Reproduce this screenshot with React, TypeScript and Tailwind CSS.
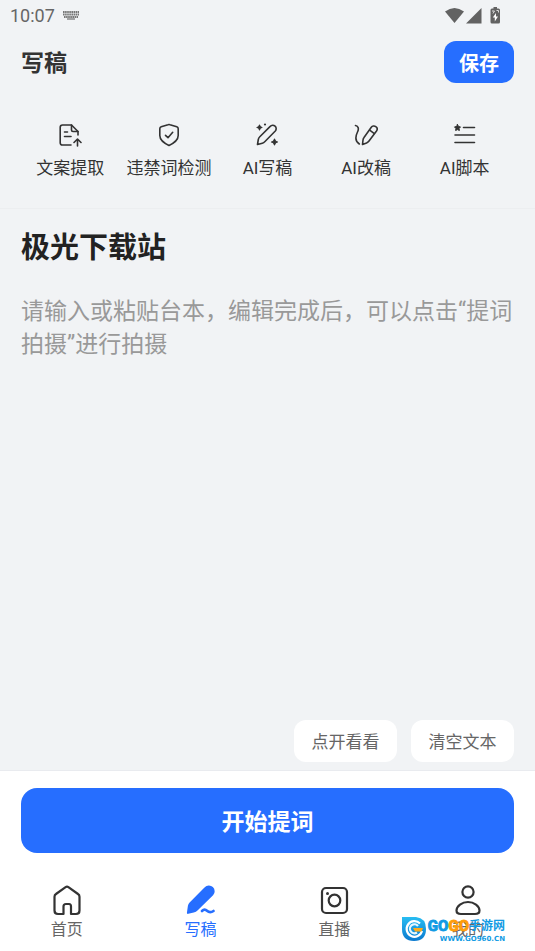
import type { ReactNode } from "react";

const line = {
  fill: "none",
  stroke: "currentColor",
  strokeLinecap: "round" as const,
  strokeLinejoin: "round" as const,
};

function Glyph({ children }: { children: ReactNode }) {
  return (
    <svg className="size-6" viewBox="0 0 24 24" {...line} strokeWidth={1.6} aria-hidden="true">
      {children}
    </svg>
  );
}

function NavGlyph({ children }: { children: ReactNode }) {
  return (
    <svg className="size-8" viewBox="0 0 32 32" {...line} strokeWidth={2.2} aria-hidden="true">
      {children}
    </svg>
  );
}

const tools: { label: string; icon: ReactNode }[] = [
  {
    label: "文案提取",
    icon: (
      <Glyph>
        <path d="M13 22H4.500Q2.200 22 2.200 19.700V4.300Q2.200 2 4.500 2H13.500L20 8.500V12" />
        <path d="M13.500 2V7Q13.500 8.500 15 8.500H20" />
        <path d="M6.500 9H9.500M6.500 13.500H13" />
        <path d="M19.500 23V16.500M16 19.500L19.500 16L23 19.500" />
      </Glyph>
    ),
  },
  {
    label: "违禁词检测",
    icon: (
      <Glyph>
        <path d="M12 1.500Q12.500 1.500 13 1.700L19.800 3.800Q21.200 4.300 21.200 5.700V12.500C21.200 17.500 17 20 12 22.500C7 20 2.800 17.500 2.800 12.500V5.700Q2.800 4.300 4.200 3.800L11 1.700Q11.500 1.500 12 1.500Z" />
        <path d="M8.500 12.300L11 14.700L15.700 9.300" />
      </Glyph>
    ),
  },
  {
    label: "AI写稿",
    icon: (
      <Glyph>
        <path d="M2.500 21.500L3.300 16.500Q3.600 15 4.800 13.800L15.200 3.400A3.200 3.200 0 0 1 20.300 8L10 18.500Q8.700 19.800 7.300 20.200Z" />
        <path d="M4.500 2Q4.800 4.200 7 4.500Q4.800 4.800 4.500 7Q4.200 4.800 2 4.500Q4.200 4.200 4.500 2ZM19.500 16Q20 18.500 22.500 19Q20 19.500 19.500 22Q19 19.500 16.500 19Q19 18.500 19.500 16Z" fill="currentColor" strokeWidth={1.200} />
        <circle cx="10" cy="1.500" r="1.100" fill="currentColor" stroke="none" />
      </Glyph>
    ),
  },
  {
    label: "AI改稿",
    icon: (
      <Glyph>
        <path d="M1.500 2.500C4.500 3 5 6 3.500 9C1.300 13.500 0.800 18 5.300 21" />
        <path d="M8.500 21.500L9 17Q9.200 15.500 10 14.500L17.300 4.300A3 3 0 0 1 22.500 8L15 18Q14 19.300 12.500 20Z" />
        <path d="M15.700 7.200L20 10.300" />
      </Glyph>
    ),
  },
  {
    label: "AI脚本",
    icon: (
      <Glyph>
        <path d="M10.500 4.500H21.500M2 12H21.500M2 19.500H21.500" />
        <path d="M4.500 1.500L5.500 3.500L7.500 3.900L6.100 5.400L6.400 7.500L4.500 6.600L2.600 7.500L2.900 5.400L1.500 3.900L3.500 3.500Z" fill="currentColor" strokeWidth={1} />
      </Glyph>
    ),
  },
];

const tabs: { label: string; active?: boolean; icon: ReactNode }[] = [
  {
    label: "首页",
    icon: (
      <NavGlyph>
        <path d="M14.600 3.200Q16 2.200 17.400 3.200L27 10Q28.500 11 28.500 12.800V26.500Q28.500 30 25 30H20V22.500Q20 20 18 20H15Q12.500 20 12.500 22.500V30H7Q3.500 30 3.500 26.500V12.800Q3.500 11 5 10Z" />
      </NavGlyph>
    ),
  },
  {
    label: "写稿",
    active: true,
    icon: (
      <NavGlyph>
        <path d="M3 28.800L4 22Q4.300 20.500 5.400 19.400L20.500 4.100A4.500 4.500 0 0 1 27.300 10.500L12 25.500Q10.500 27 8.500 27.500Z" fill="currentColor" />
        <path d="M17 27Q19.500 24.500 22 26.800Q25 29.500 28.500 27" strokeWidth={2.700} />
      </NavGlyph>
    ),
  },
  {
    label: "直播",
    icon: (
      <NavGlyph>
        <rect x="4" y="4" width="25" height="25" rx="4" />
        <circle cx="16.500" cy="16.500" r="5.800" />
        <circle cx="9.500" cy="9.500" r="1.500" fill="currentColor" stroke="none" />
      </NavGlyph>
    ),
  },
  {
    label: "我的",
    icon: (
      <NavGlyph>
        <circle cx="16" cy="8" r="5.600" />
        <path d="M16 18C10 18 4.500 22 4.500 26.500Q4.500 30 9 30H23Q27.500 30 27.500 26.500C27.500 22 22 18 16 18Z" />
      </NavGlyph>
    ),
  },
];

function StatusBar() {
  return (
    <div className="flex h-8 items-center pr-[34px] pl-2.5 text-[#666]">
      <span className="text-lg leading-8">10:07</span>
      <svg className="ml-2 h-3 w-4" viewBox="0 0 16 12" fill="none" stroke="#777" aria-hidden="true">
        <path d="M0 2H16M0 4.500H16M1 7H15" strokeWidth="1.800" strokeDasharray="1.600 .5" />
        <path d="M4 9H12" strokeWidth="1.300" />
      </svg>
      <svg className="ml-auto h-5 w-14" viewBox="0 0 56 20" fill="#626262" aria-hidden="true">
        <path d="M0 5.500Q9.500-1.500 19 5.500L9.500 17Z" />
        <path d="M36.500 2V17.500H21Z" />
        <path d="M48.500 1H52V2.500H53.500Q55 2.500 55 4V16Q55 17.500 53.500 17.500H47Q45.500 17.500 45.500 16V4Q45.500 2.500 47 2.500H48.500Z" />
        <path d="M51 7L47.800 11.500H49.800V15.500L53 10.500H51Z" fill="#fff" />
        <path d="M47 5H49.500L48 7.500M51.500 4.500H53.500V6.500" fill="none" stroke="#ddd" />
      </svg>
    </div>
  );
}

function Watermark() {
  return (
    <div className="pointer-events-none absolute right-[30px] bottom-[9px] flex items-center gap-0.5 text-[#129be4]">
      <svg className="size-6" viewBox="0 0 24 24" aria-hidden="true">
        <defs>
          <linearGradient id="badge" x1="0" y1="0" x2="0" y2="1">
            <stop offset="0" stopColor="#28bdf2" />
            <stop offset="1" stopColor="#0a79cf" />
          </linearGradient>
        </defs>
        <path d="M0 0H14Q24 1 24 12Q24 24 12 24Q0 24 0 12Z" fill="url(#badge)" />
        <path d="M18 6.500A7.800 7.800 0 1 0 20 14" fill="none" stroke="#fff" strokeWidth="2.200" />
        <path d="M16 9A4.500 4.500 0 1 0 15 15.500" fill="none" stroke="#e4f7ff" strokeWidth="2.200" />
        <path d="M11 11H21L19.500 14.500H13Z" fill="#ffab19" />
      </svg>
      <div className="flex flex-col items-end">
        <div className="flex h-5 items-center font-bold whitespace-nowrap">
          <span className="text-[15px] leading-5 [-webkit-text-stroke:1px]">
            GO<span className="text-[#ff9d0a]">GO</span>
          </span>
          <span className="text-xs leading-5">手游网</span>
        </div>
        <span className="font-['DejaVu_Sans',sans-serif] text-[7px] leading-[6px] font-bold">WWW.GO960.CN</span>
      </div>
    </div>
  );
}

export default function App() {
  return (
    <div className="relative flex min-h-screen flex-col bg-[#f1f3f5] font-['Roboto','Noto_Sans_CJK_SC',sans-serif] text-[#333]">
      <StatusBar />
      <header className="flex h-[60px] items-center justify-between px-[21px]">
        <h1 className="pt-1 text-[23px] leading-8 font-bold">写稿</h1>
        <button type="button" className="h-[42px] rounded-xl bg-[#266eff] px-[15px] pt-1 text-xl font-bold text-white">
          保存
        </button>
      </header>

      <div className="grid grid-cols-5 border-b border-[#eceef0] px-[21px] pt-[31px] pb-[27px]">
        {tools.map((tool) => (
          <button key={tool.label} type="button" className="flex flex-col items-center gap-2 whitespace-nowrap">
            {tool.icon}
            <span className="text-[17px] leading-[26px]">{tool.label}</span>
          </button>
        ))}
      </div>

      <main className="flex flex-1 flex-col px-[21px] pt-3.5 pb-2">
        <input
          aria-label="标题"
          defaultValue="极光下载站"
          className="h-11 w-full bg-transparent text-[29px] font-bold text-[#222] outline-none"
        />
        <textarea
          aria-label="台本"
          placeholder="请输入或粘贴台本，编辑完成后，可以点击“提词拍摄”进行拍摄"
          className="mt-7 w-full flex-1 resize-none bg-transparent text-[23px] leading-[33px] outline-none placeholder:text-[#999]"
        />
        <div className="flex justify-end gap-3.5 text-[17px] text-[#666]">
          <button type="button" className="h-[42px] min-w-[103px] rounded-xl bg-white px-4 pt-1">
            点开看看
          </button>
          <button type="button" className="h-[42px] min-w-[103px] rounded-xl bg-white px-4 pt-1">
            清空文本
          </button>
        </div>
      </main>

      <footer className="border-t border-[#e9ebef] bg-white">
        <div className="px-[21px] pt-[17px]">
          <button type="button" className="h-[65px] w-full rounded-2xl bg-[#266eff] pt-1.5 text-[23px] font-bold text-white">
            开始提词
          </button>
        </div>
        <nav className="grid grid-cols-4 pt-[31px] pb-[9px]">
          {tabs.map((tab) => (
            <a
              key={tab.label}
              href="#"
              aria-current={tab.active ? "page" : undefined}
              className={
                tab.active
                  ? "flex flex-col items-center gap-0.5 text-[#266eff]"
                  : "flex flex-col items-center gap-0.5"
              }
            >
              {tab.icon}
              <span className={tab.active ? "text-base leading-6" : "text-base leading-6 text-[#666]"}>{tab.label}</span>
            </a>
          ))}
        </nav>
      </footer>
      <Watermark />
    </div>
  );
}
